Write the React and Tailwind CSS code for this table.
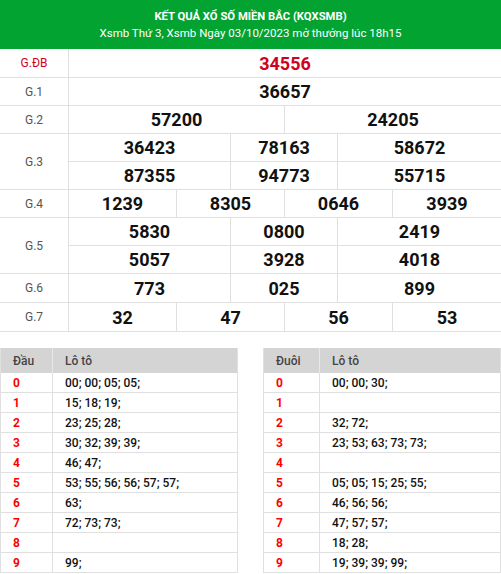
import React from 'react'

const font = { fontFamily: 'Roboto, "Liberation Sans", sans-serif' }

const dau = [
  ['0', '00; 00; 05; 05;'],
  ['1', '15; 18; 19;'],
  ['2', '23; 25; 28;'],
  ['3', '30; 32; 39; 39;'],
  ['4', '46; 47;'],
  ['5', '53; 55; 56; 56; 57; 57;'],
  ['6', '63;'],
  ['7', '72; 73; 73;'],
  ['8', ''],
  ['9', '99;'],
]

const duoi = [
  ['0', '00; 00; 30;'],
  ['1', ''],
  ['2', '32; 72;'],
  ['3', '23; 53; 63; 73; 73;'],
  ['4', ''],
  ['5', '05; 05; 15; 25; 55;'],
  ['6', '46; 56; 56;'],
  ['7', '47; 57; 57;'],
  ['8', '18; 28;'],
  ['9', '19; 39; 39; 99;'],
]

function Label({ children, red }) {
  return (
    <div className={`w-[69px] shrink-0 border-r border-[#e0e0e0] flex items-center justify-center text-[12px] ${red ? 'text-[#d0021b]' : 'text-[#555]'}`}>
      {children}
    </div>
  )
}

function Num({ children, border, red }) {
  return (
    <div className={`flex items-center justify-center text-[18px] font-bold ${red ? 'text-[#d0021b]' : 'text-[#111]'} ${border ? 'border-r border-[#e0e0e0]' : ''}`}>
      {children}
    </div>
  )
}

function Three({ nums, h }) {
  return (
    <div className={`grid grid-cols-[162px_107px_1fr] ${h}`}>
      <Num border>{nums[0]}</Num>
      <Num border>{nums[1]}</Num>
      <Num>{nums[2]}</Num>
    </div>
  )
}

function Four({ nums }) {
  return (
    <div className="grid grid-cols-4 h-full">
      {nums.map((n, i) => <Num key={i} border={i < 3}>{n}</Num>)}
    </div>
  )
}

function LotoTable({ head, rows, firstW }) {
  return (
    <div className="w-[238px] border-l border-r border-[#e0e0e0]">
      <div className="flex h-[25px] bg-[#d4d4d4] text-[12px] font-medium text-[#444]">
        <div className={`${firstW} shrink-0 border-r border-[#e8e8e8] flex items-center pl-[12px]`}>{head}</div>
        <div className="flex-1 flex items-center pl-[12px]">Lô tô</div>
      </div>
      {rows.map(([d, v]) => (
        <div key={d} className="flex h-[20px] border-b border-[#e0e0e0] text-[12px]">
          <div className={`${firstW} shrink-0 border-r border-[#e0e0e0] flex items-center pl-[12px] font-bold text-[#ff0000]`}>{d}</div>
          <div className="flex-1 flex items-center pl-[12px] font-medium text-[#111]">{v}</div>
        </div>
      ))}
    </div>
  )
}

export default function App() {
  return (
    <div className="w-[501px] h-[574px] bg-white overflow-hidden" style={font}>
      <div className="h-[49px] bg-[#03a332] text-white flex flex-col items-center justify-center pt-[1px]">
        <div className="text-[11.25px] font-bold leading-[16px]">KẾT QUẢ XỔ SỐ MIỀN BẮC (KQXSMB)</div>
        <div className="text-[11.5px] leading-[17px]">Xsmb Thứ 3, Xsmb Ngày 03/10/2023 mở thưởng lúc 18h15</div>
      </div>

      <div className="border-b border-[#e0e0e0]">
        <div className="flex h-[29px] border-b border-[#e0e0e0]">
          <Label red>G.ĐB</Label>
          <div className="flex-1 grid"><Num red>34556</Num></div>
        </div>
        <div className="flex h-[28px] border-b border-[#e0e0e0]">
          <Label>G.1</Label>
          <div className="flex-1 grid"><Num>36657</Num></div>
        </div>
        <div className="flex h-[28px] border-b border-[#e0e0e0]">
          <Label>G.2</Label>
          <div className="flex-1 grid grid-cols-2">
            <Num border>57200</Num>
            <Num>24205</Num>
          </div>
        </div>
        <div className="flex h-[56px] border-b border-[#e0e0e0]">
          <Label>G.3</Label>
          <div className="flex-1 flex flex-col">
            <div className="border-b border-[#e0e0e0]"><Three nums={['36423', '78163', '58672']} h="h-[27px]" /></div>
            <Three nums={['87355', '94773', '55715']} h="h-[27px]" />
          </div>
        </div>
        <div className="flex h-[28px] border-b border-[#e0e0e0]">
          <Label>G.4</Label>
          <div className="flex-1"><Four nums={['1239', '8305', '0646', '3939']} /></div>
        </div>
        <div className="flex h-[56px] border-b border-[#e0e0e0]">
          <Label>G.5</Label>
          <div className="flex-1 flex flex-col">
            <div className="border-b border-[#e0e0e0]"><Three nums={['5830', '0800', '2419']} h="h-[27px]" /></div>
            <Three nums={['5057', '3928', '4018']} h="h-[27px]" />
          </div>
        </div>
        <div className="flex h-[29px] border-b border-[#e0e0e0]">
          <Label>G.6</Label>
          <div className="flex-1"><Three nums={['773', '025', '899']} h="h-full" /></div>
        </div>
        <div className="flex h-[28px]">
          <Label>G.7</Label>
          <div className="flex-1"><Four nums={['32', '47', '56', '53']} /></div>
        </div>
      </div>

      <div className="flex justify-between mt-[16px]">
        <LotoTable head="Đầu" rows={dau} firstW="w-[52px]" />
        <LotoTable head="Đuôi" rows={duoi} firstW="w-[56px]" />
      </div>
    </div>
  )
}
